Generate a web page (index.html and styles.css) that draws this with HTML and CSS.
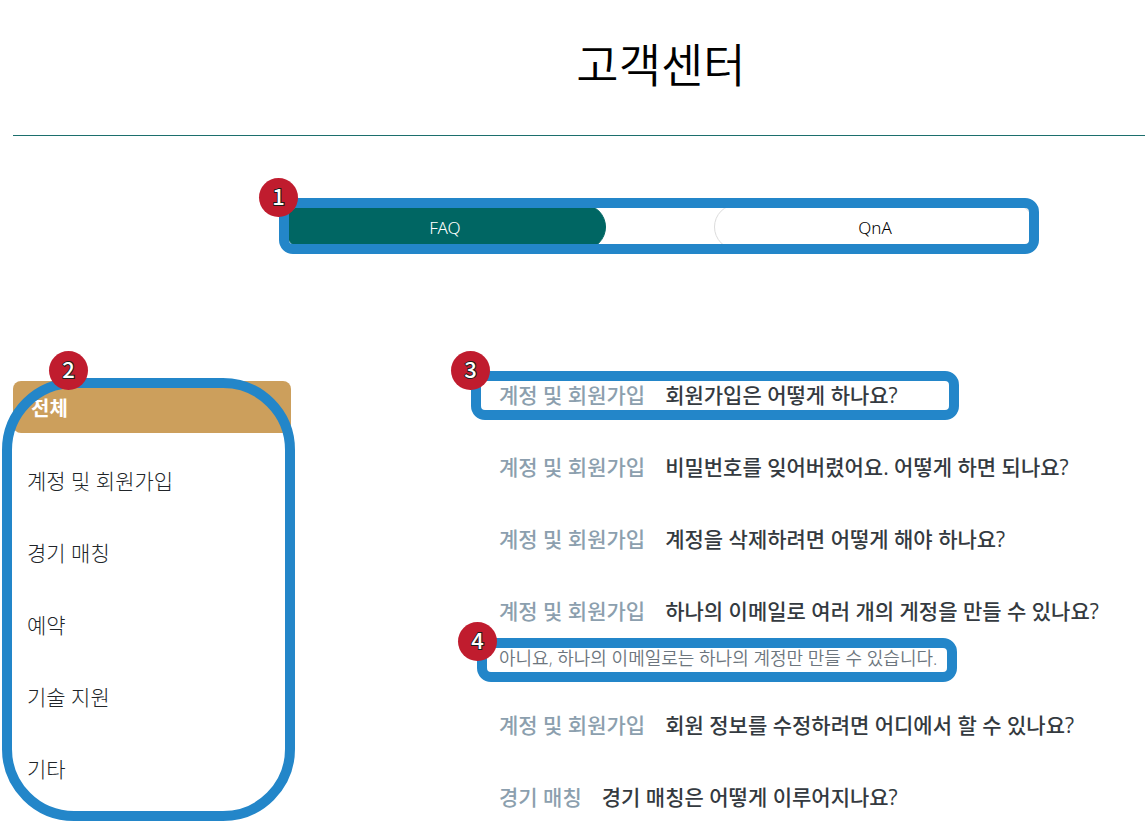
FILE: index.html
```html
<!DOCTYPE html>
<html lang="ko">
<head>
<meta charset="utf-8">
<meta name="viewport" content="width=device-width, initial-scale=1">
<title>고객센터</title>
<link rel="stylesheet" href="styles.css">
</head>
<body>
<div class="page">
  <header class="page-header">
    <h1 class="page-title">고객센터</h1>
  </header>
  <div class="tabs-row">
    <div class="tabs">
      <button type="button" class="tab tab-active">FAQ</button>
      <button type="button" class="tab">QnA</button>
      <div class="marker marker-tabs"><span class="badge">1</span></div>
    </div>
  </div>
  <main class="content">
    <nav class="categories">
      <a class="category category-active" href="#all">전체</a>
      <a class="category" href="#account">계정 및 회원가입</a>
      <a class="category" href="#match">경기 매칭</a>
      <a class="category" href="#booking">예약</a>
      <a class="category" href="#support">기술 지원</a>
      <a class="category" href="#etc">기타</a>
      <div class="marker marker-categories"><span class="badge">2</span></div>
    </nav>
    <section class="faq-list">
      <article class="faq">
        <button type="button" class="question"><span class="tag">계정 및 회원가입</span><span>회원가입은 어떻게 하나요?</span></button>
        <div class="marker marker-question"><span class="badge">3</span></div>
      </article>
      <article class="faq">
        <button type="button" class="question"><span class="tag">계정 및 회원가입</span><span>비밀번호를 잊어버렸어요. 어떻게 하면 되나요?</span></button>
      </article>
      <article class="faq">
        <button type="button" class="question"><span class="tag">계정 및 회원가입</span><span>계정을 삭제하려면 어떻게 해야 하나요?</span></button>
      </article>
      <article class="faq">
        <button type="button" class="question"><span class="tag">계정 및 회원가입</span><span>하나의 이메일로 여러 개의 게정을 만들 수 있나요?</span></button>
        <div class="answer">
          <p class="answer-text">아니요, 하나의 이메일로는 하나의 계정만 만들 수 있습니다.</p>
          <div class="marker marker-answer"><span class="badge">4</span></div>
        </div>
      </article>
      <article class="faq">
        <button type="button" class="question"><span class="tag">계정 및 회원가입</span><span>회원 정보를 수정하려면 어디에서 할 수 있나요?</span></button>
      </article>
      <article class="faq">
        <button type="button" class="question"><span class="tag">경기 매칭</span><span>경기 매칭은 어떻게 이루어지나요?</span></button>
      </article>
    </section>
  </main>
</div>
</body>
</html>
```
FILE: styles.css
```css
* {
  box-sizing: border-box;
}

body {
  margin: 0;
  background: #fff;
  color: #343a40;
  font-family: "Open Sans", "Noto Sans CJK KR", sans-serif;
}

button {
  border: 0;
  background: none;
  font: inherit;
  color: inherit;
  cursor: pointer;
}

.page {
  padding-left: 13px;
}

.page-header {
  padding: 28px 0 39px 164px;
  border-bottom: 1px solid #1c6f6d;
}

.page-title {
  margin: 0;
  font-family: "Noto Sans CJK KR", sans-serif;
  font-size: 46px;
  font-weight: 350;
  line-height: 68px;
  text-align: center;
  color: #000;
}

.tabs-row {
  display: flex;
  justify-content: center;
  padding: 68px 0 0 162px;
}

.tabs {
  position: relative;
  display: grid;
  grid-template-columns: 1fr 1fr;
  gap: 108px;
  width: 752px;
}

.tab {
  height: 46px;
  padding: 0;
  border: 1px solid #dcdcdc;
  border-radius: 23px;
  font-family: "Noto Sans", sans-serif;
  font-size: 17px;
  font-weight: 300;
  color: #000;
}

.tab-active {
  border-color: #006663;
  background: #006663;
  color: #fff;
}

.content {
  display: grid;
  grid-template-columns: 278px 1fr;
  column-gap: 208px;
  align-items: start;
  padding-top: 119px;
}

.categories {
  position: relative;
  display: flex;
  flex-direction: column;
  gap: 20px;
  margin-top: 12px;
}

.category {
  height: 52px;
  padding-left: 14px;
  border-radius: 8px;
  font-size: 21px;
  font-weight: 300;
  line-height: 56px;
  color: #212529;
  text-decoration: none;
}

.category-active {
  padding-left: 18px;
  background: #cc9f5c;
  font-size: 20px;
  font-weight: 700;
  color: #fff;
}

.faq-list {
  display: flex;
  flex-direction: column;
  gap: 20px;
}

.faq {
  position: relative;
}

.question {
  display: flex;
  align-items: center;
  gap: 20px;
  height: 52px;
  padding: 0;
  font-size: 21px;
  font-weight: 500;
  line-height: 52px;
  white-space: nowrap;
}

.tag {
  color: #8c9fae;
}

.answer {
  position: relative;
}

.answer-text {
  margin: 0;
  font-size: 18px;
  font-weight: 350;
  line-height: 42px;
  color: #6c757d;
}

/* Numbered callouts laid over the page */
.marker {
  position: absolute;
  border: 10px solid #2386c9;
  border-radius: 14px;
  pointer-events: none;
}

.marker-tabs {
  inset: -6px -3px -4px -5px;
}

.marker-categories {
  inset: -3px -4px -28px -11px;
  border-radius: 72px;
}

.marker-question {
  top: 2px;
  left: -28px;
  width: 488px;
  height: 49px;
}

.marker-answer {
  top: 1px;
  left: -22px;
  width: 480px;
  height: 44px;
}

.badge {
  position: absolute;
  top: -30px;
  left: -30px;
  width: 39px;
  height: 39px;
  border-radius: 50%;
  background: #c01c2e;
  font-family: "Noto Sans CJK KR", sans-serif;
  font-size: 22px;
  font-weight: 500;
  line-height: 34px;
  text-align: center;
  color: #fff;
  -webkit-text-stroke: 2px #1c1c1c;
  paint-order: stroke fill;
}

.marker-categories .badge {
  top: -37px;
  left: 37px;
}

.marker-answer .badge {
  top: -26px;
  left: -29px;
}
```
